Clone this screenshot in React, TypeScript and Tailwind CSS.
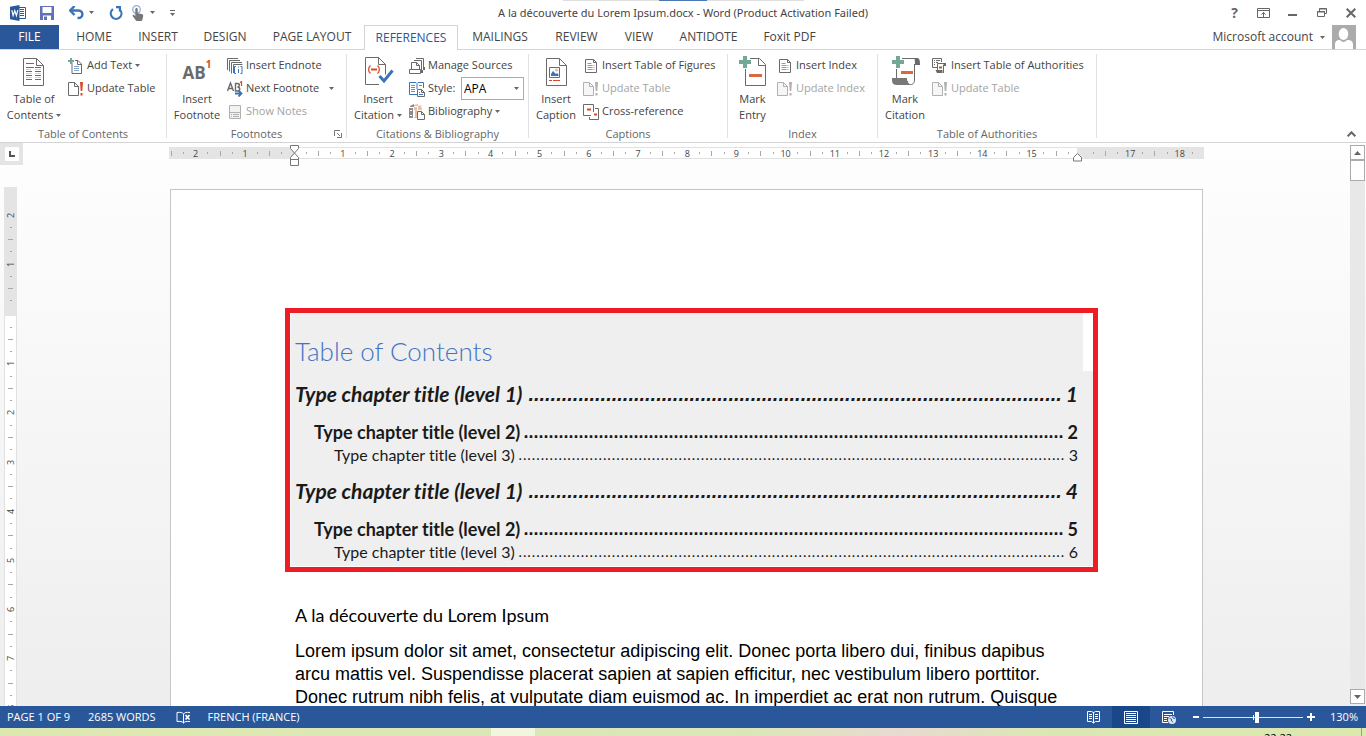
import type { ReactNode } from "react";

const INK = "#6a6a6a";
const BLUE = "#3b73b9";
const RED = "#d9482b";
const TEAL = "#72a894";
const FAINT = "#b1b1b1";

function Caret({ className = "" }: { className?: string }) {
  return (
    <svg aria-hidden="true" viewBox="0 0 5 3" className={`h-[3px] w-[5px] shrink-0 ${className}`}>
      <path d="M0 0h5L2.5 3z" fill="#666" />
    </svg>
  );
}

function Glyph({ w = 16, h = 16, children }: { w?: number; h?: number; children: ReactNode }) {
  return (
    <svg aria-hidden="true" width={w} height={h} viewBox={`0 0 ${w} ${h}`} fill="none" className="shrink-0">
      {children}
    </svg>
  );
}

/* Quick access toolbar */

function WordLogo() {
  return (
    <Glyph>
      <path d="M8 2.5h7.5v11H8z" fill="#fff" stroke="#2a569a" />
      <path d="M10 4.5h4M10 6.5h4M10 8.5h4M10 10.5h4" stroke="#2a569a" />
      <path d="M0 1.8 9.5 0v16L0 14.2z" fill="#2a569a" />
      <path d="M1.8 5.2l1.3 5.4L4.8 5.6l1.6 5L7.8 5.2" stroke="#fff" strokeWidth="1.2" />
    </Glyph>
  );
}

function SaveIcon() {
  return (
    <Glyph w={14} h={14}>
      <path d="M0 0h14v14H0z" fill="#6470b5" />
      <path d="M2.5 1h9v6h-9z" fill="#fff" />
      <path d="M3 9.5h8V14H3z" fill="#fff" />
      <path d="M4 10.5h3V14H4z" fill="#6470b5" />
    </Glyph>
  );
}

function UndoIcon() {
  return (
    <Glyph w={15} h={14}>
      <path d="M2 4.500h7.500c5 0 5.500 7.500-.5 7.500H8.500" stroke={BLUE} strokeWidth="2.400" />
      <path d="M5.500 0 1.200 4.500l4.300 4.500" stroke={BLUE} strokeWidth="2.400" />
    </Glyph>
  );
}

function RepeatIcon() {
  return (
    <Glyph w={14} h={14}>
      <path d="M4 3.200A5.300 5.300 0 1 0 11.500 4.500" stroke={BLUE} strokeWidth="2.200" />
      <path d="M7 0h5v5.500H9.800V2.200H7z" fill={BLUE} />
    </Glyph>
  );
}

function TouchIcon() {
  return (
    <Glyph w={12} h={16}>
      <circle cx="4.500" cy="4.500" r="3.800" stroke="#8fb0d8" strokeWidth="1.300" />
      <path
        d="M3.300 4.200c0-1.600 2.400-1.600 2.400 0v4l4 .8c1.200.3 1.600 1 1.500 2l-.6 3-.8 2H4.300L.8 11.200c-.6-1 .6-1.800 1.500-1l1 .8z"
        fill="#777"
      />
    </Glyph>
  );
}

function CustomizeIcon() {
  return (
    <Glyph w={5} h={6}>
      <path d="M0 .5h5" stroke="#666" />
      <path d="M0 3h5L2.500 6z" fill="#666" />
    </Glyph>
  );
}

/* Ribbon: large icons */

function PageOutline({ x = 0, y = 0 }: { x?: number; y?: number }) {
  return (
    <g transform={`translate(${x} ${y})`}>
      <path d="M.5.500h13l7 7v20H.500z" fill="#fff" stroke={INK} />
      <path d="M13.500.500v7h7" stroke={INK} />
    </g>
  );
}

function TocIcon() {
  return (
    <Glyph w={32} h={32}>
      <PageOutline x={5} y={2} />
      <path d="M8 7.500h8M8 11.500h8M8 15.500h6M8 19.500h6M8 23.500h6" stroke={BLUE} />
      <path d="M17 11.500h6M17 15.500h6M17 19.500h6M17 23.500h6" stroke={BLUE} />
      <path d="M8 13.500h5M8 17.500h6M8 21.500h6M17 13.500h6M17 17.500h6M17 21.500h6" stroke="#c3d3e9" />
    </Glyph>
  );
}

function CitationIcon() {
  return (
    <Glyph w={32} h={32}>
      <path d="M3.500 1.500h13l7 7v10M17 28.500H3.500v-27M16.500 1.500v7h7" stroke={INK} />
      <path d="M8.500 9.500c-2.500 2-2.500 6 0 8M15.500 9.500c2.500 2 2.500 6 0 8" stroke={RED} strokeWidth="1.300" />
      <path d="M9 13.500h6" stroke={RED} strokeWidth="2" />
      <path d="m17.500 20 4.500 5 8.500-10.500" stroke={BLUE} strokeWidth="3" />
    </Glyph>
  );
}

function CaptionIcon() {
  return (
    <Glyph w={32} h={32}>
      <PageOutline x={6} y={2} />
      <path d="M9.500 11.500h10v10h-10z" stroke={INK} fill="#fff" />
      <path d="M11 20v-2l2-3 3 3 1-1 1.500 1.500V20z" fill={BLUE} />
      <circle cx="16.500" cy="14" r="1.500" fill="#eeb99d" />
      <path d="M9 24.500h3M13 24.500h7" stroke={RED} />
    </Glyph>
  );
}

function MarkEntryIcon() {
  return (
    <Glyph w={32} h={32}>
      <path d="M13 2.500h9.500l6 6v21H8.500V13M21.500 2.500v7h7" stroke={INK} />
      <path d="M6 0h4v4h4v4h-4v4H6V8H2V4h4z" fill={TEAL} />
      <path d="M12 19.500h13" stroke="#dc6841" strokeWidth="3" />
    </Glyph>
  );
}

function MarkCitationIcon() {
  return (
    <Glyph w={32} h={32}>
      <path d="M13 2.500h14M7.500 13v10M25.500 8v16c0 6-7 6-7 1" stroke={INK} />
      <path d="M25 2h3c2.500 0 3 2 3 7h-5c0-4 0-5-1-7z" fill={INK} />
      <path d="M3 22h15c0 4 1 6 4 7H8c-5 0-5-3-5-7z" fill="#787878" />
      <path d="M7 0h4v4h4v4h-4v4H7V8H3V4h4z" fill={TEAL} />
      <path d="M12 16.500h12" stroke="#dc6841" strokeWidth="3" />
    </Glyph>
  );
}

function FootnoteIcon() {
  return (
    <span aria-hidden="true" className="flex h-8 items-start justify-center font-bold">
      <span className="pt-[7px] text-[17px] leading-[20px] text-[#6a6a6a]">AB</span>
      <span className="pt-[2px] text-[10px] leading-[13px] text-[#d9482b]">1</span>
    </span>
  );
}

/* Ribbon: small icons */

function AddTextIcon() {
  return (
    <Glyph>
      <path d="M4 4.500V15.500h9.500V6L10 2.500H7M9.500 2.500v4h4" stroke={INK} />
      <path d="M6 8.500h5M6 10.500h5M6 12.500h5" stroke="#86a5d0" />
      <path d="M2 0h2v2h2v2H4v2H2V4H0V2h2z" fill={TEAL} />
    </Glyph>
  );
}

function UpdateIcon({ disabled = false }: { disabled?: boolean }) {
  const line = disabled ? FAINT : INK;
  const bang = disabled ? FAINT : RED;
  return (
    <Glyph>
      <path d="M.500 1.500h6l4 4v9H.500z" stroke={line} fill={disabled ? "#f6f6f6" : "#fff"} />
      <path d="M6.500 1.500v4h4" stroke={line} />
      <path d="M12 1h3l-.7 9h-1.600zM12.500 12h2v2.500h-2z" fill={bang} />
    </Glyph>
  );
}

function EndnoteIcon() {
  return (
    <Glyph>
      <path d="M.500 12V.500H11M2.500 13.500v-11H13M4.500 15.500v-11H15M6.500 15V6.500h9" stroke={INK} />
      <path d="M9 8.500H7.500v7H9M13.500 8.500H15v7h-1.500M11.500 11v4M11.500 8.500v1" stroke={BLUE} />
    </Glyph>
  );
}

function NextFootnoteIcon() {
  return (
    <Glyph>
      <path d="m.500 10 3-8 3 8M1.500 7.500h4M8.500 10V2.500h2c2.500 0 2.500 3.300 0 3.500 3 .2 3 4 0 4z" stroke={INK} strokeWidth="1.400" />
      <path d="m13 1.500 1.500-1V5" stroke={RED} strokeWidth="1.200" />
      <path d="M8 12.500h6M11.500 9.500l3 3-3 3" stroke={BLUE} strokeWidth="1.800" />
    </Glyph>
  );
}

function ShowNotesIcon() {
  return (
    <Glyph>
      <path d="M2.500 1.500h11v13h-11z" fill="#f2f2f2" stroke={FAINT} />
      <path d="M2 8.500h12M4 10.500h1M6 10.500h6M4 12.500h1M6 12.500h6" stroke={FAINT} />
    </Glyph>
  );
}

function SourcesIcon() {
  return (
    <Glyph>
      <path d="M.500 11.500h11v4H.500zM2.500 11V4.500h5l3 3V11M7.500 4.500v3h3" stroke={INK} />
      <path d="M5 2.500h7.500V12M7 .500h7.500V10" stroke={INK} />
      <path d="M12 12h2v3h-2zM14 9h2v3h-2z" fill={INK} />
    </Glyph>
  );
}

function StyleIcon() {
  return (
    <Glyph>
      <path d="M8 13.500H.500v-12H7l1 1 1-1h5.500V7M8 3v5" stroke={BLUE} />
      <path d="M2 4.500h4M2 6.500h4M2 8.500h4M2 10.500h4M10 4.500h3" stroke="#8a8a8a" />
      <path d="M8.500 8.500h4l3 3v4h-7z" fill="#fff" stroke={INK} />
      <path d="M12.500 8.500v3h3" stroke={INK} />
      <path d="M10 11.500h1M10 13.500h4" stroke={BLUE} />
    </Glyph>
  );
}

function BibliographyIcon() {
  return (
    <Glyph>
      <path d="M0 4h4v10H0zM1 2l4-2v3H1z" fill="#8b8b8b" />
      <path d="M5 3h3v11H5zM9 2l3-1 1 5H9zM5 1l4-1v2H5z" fill="#efbd9f" />
      <path d="M1 6.500h2M1 11.500h2M5.500 6v7" stroke="#fff" />
      <path d="M8.500 7.500h4l3 3v5h-7z" fill="#fff" stroke={INK} />
      <path d="M12.500 7.500v3h3" stroke={INK} />
    </Glyph>
  );
}

function LinesPageIcon() {
  return (
    <Glyph>
      <path d="M2.500 1.500h8l3 3v10h-11z" stroke={INK} />
      <path d="M10.500 1.500v3h3" stroke={INK} />
      <path d="M4.500 5.500h4M4.500 7.500h7M4.500 9.500h7M4.500 11.500h7" stroke="#999" strokeDasharray="5 1" />
    </Glyph>
  );
}

function CrossReferenceIcon() {
  return (
    <Glyph>
      <path d="M8 11.500H.500v-11h10V8" stroke={INK} />
      <path d="M12 4.500h3.500v11h-9V13" stroke={INK} />
      <path d="M4 5.500h4M11 10.500h3" stroke={RED} strokeWidth="2" />
    </Glyph>
  );
}

function AuthoritiesIcon() {
  return (
    <Glyph>
      <path d="M5 9.500H.500v-9h9V4M2 2.500h1M4 2.500h4M2 4.500h1M4 4.500h2M2 6.500h1" stroke={INK} />
      <path d="M5.500 12V5.500h7M11.500 7v8" stroke={INK} />
      <path d="M11 5h3v3h-2zM3.500 12h7v3H5z" fill={INK} />
      <path d="M7 9.500h3" stroke={RED} strokeWidth="2" />
    </Glyph>
  );
}

/* Ribbon building blocks */

function BigButton({ icon, top, bottom, caret, className }: { icon: ReactNode; top: string; bottom: string; caret?: boolean; className: string }) {
  return (
    <button type="button" className={`flex shrink-0 flex-col items-center pt-[6px] leading-4 whitespace-nowrap ${className}`}>
      {icon}
      <span className="mt-[3px]">{top}</span>
      <span className="flex items-center gap-[3px]">
        {bottom}
        {caret && <Caret />}
      </span>
    </button>
  );
}

function SmallButton({ icon, label, caret, disabled }: { icon: ReactNode; label: string; caret?: "near" | "far"; disabled?: boolean }) {
  return (
    <button type="button" disabled={disabled} className="flex h-[23px] items-center gap-[3px] whitespace-nowrap disabled:text-[#a3a3a3]">
      {icon}
      <span>{label}</span>
      {caret && <Caret className={caret === "far" ? "ml-[7px]" : ""} />}
    </button>
  );
}

function Group({ title, className, launcher, children }: { title: string; className: string; launcher?: boolean; children: ReactNode }) {
  return (
    <section aria-label={title} className={`flex shrink-0 py-1 ${className}`}>
      <div className="relative flex min-w-0 flex-1 flex-col border-r border-[#e1e1e1]">
        <div className="-mt-1 flex flex-1">{children}</div>
        <h2 className="text-center text-[11px] leading-2 text-[#666]">{title}</h2>
        {launcher && (
          <button type="button" aria-label={`${title} options`} className="absolute right-[4px] bottom-0">
            <Glyph w={8} h={8}>
              <path d="M.500 6V.500H6M3 3l3 3M7.500 3v4.500H3" stroke="#777" />
            </Glyph>
          </button>
        )}
      </div>
    </section>
  );
}

function Rows({ children }: { children: ReactNode }) {
  return <div className="flex flex-col items-start pt-1">{children}</div>;
}

const tabs = [
  { name: "HOME", width: "w-16" },
  { name: "INSERT", width: "w-16" },
  { name: "DESIGN", width: "w-[70px]" },
  { name: "PAGE LAYOUT", width: "w-[104px]" },
  { name: "REFERENCES", width: "w-[94px]" },
  { name: "MAILINGS", width: "w-[84px]" },
  { name: "REVIEW", width: "w-[69px]" },
  { name: "VIEW", width: "w-14" },
  { name: "ANTIDOTE", width: "w-[83px]" },
  { name: "Foxit PDF", width: "w-[79px]" },
];

/* Rulers: one mark per quarter of a centimetre */

function range(from: number, to: number) {
  return Array.from({ length: to - from + 1 }, (_, i) => from + i);
}

function Mark({ quarter, vertical }: { quarter: number; vertical?: boolean }) {
  const turn = vertical ? "-rotate-90" : "";
  if (quarter % 4 === 0) return <span className={`text-[9px] leading-none text-[#444] ${turn}`}>{Math.abs(quarter / 4)}</span>;
  if (quarter % 2 === 0) return <span className={vertical ? "h-px w-[5px] shrink-0 bg-[#a8a8a8]" : "h-[5px] w-px shrink-0 bg-[#a8a8a8]"} />;
  return <span className={vertical ? "h-px w-[2px] shrink-0 bg-[#a8a8a8]" : "h-[2px] w-px shrink-0 bg-[#a8a8a8]"} />;
}

function Marks({ from, to, vertical, className }: { from: number; to: number; vertical?: boolean; className: string }) {
  return (
    <div className={`flex justify-between ${vertical ? "flex-col" : ""} ${className}`}>
      {range(from, to).map((q) => (
        <span key={q} className={`flex items-center justify-center ${vertical ? "h-0" : "w-0"}`}>
          <Mark quarter={q} vertical={vertical} />
        </span>
      ))}
    </div>
  );
}

/* Document */

const toc = [
  { level: 1, page: 1 },
  { level: 2, page: 2 },
  { level: 3, page: 3 },
  { level: 1, page: 4 },
  { level: 2, page: 5 },
  { level: 3, page: 6 },
];

const levels: Record<number, { line: string; leader: string; dots: number }> = {
  1: { line: "h-12 pt-[10px] text-[21px] font-bold italic", leader: "text-[20px]", dots: 96 },
  2: { line: "h-[23px] pl-[19px] text-[18px] font-bold", leader: "text-[18px]", dots: 108 },
  3: { line: "h-[26px] pl-[39px] text-[16px]", leader: "text-[16px]", dots: 123 },
};

function TocLine({ level, page }: { level: number; page: number }) {
  const { line, leader, dots } = levels[level];
  return (
    <li>
      <a href={`#page-${page}`} className={`flex leading-6 whitespace-nowrap text-[#1a1a1a] ${line}`}>
        <span>{`Type chapter title (level ${level})`}</span>
        <span aria-hidden="true" className={`ml-auto font-['Liberation_Sans',Arial,sans-serif] ${leader}`}>
          {".".repeat(dots)}
        </span>
        <span className="ml-1">{page}</span>
      </a>
    </li>
  );
}

export default function App() {
  return (
    <div className="flex h-screen flex-col overflow-hidden bg-white font-['Open_Sans','Noto_Sans',sans-serif] text-[11px] text-[#444]">
      <header className="relative grid h-[25px] shrink-0 grid-cols-[1fr_auto_1fr] items-center">
        <div aria-hidden="true" className="absolute inset-x-0 top-0 mx-auto flex h-px w-[241px] justify-center bg-[#dedede]">
          <span className="w-12 bg-[#4a78b8]" />
        </div>
        <div className="flex items-center pl-[10px]">
          <WordLogo />
          <button type="button" aria-label="Save" className="ml-[14px]"><SaveIcon /></button>
          <button type="button" aria-label="Undo" className="ml-[15px] flex items-center gap-[5px]"><UndoIcon /><Caret /></button>
          <button type="button" aria-label="Repeat" className="ml-[15px]"><RepeatIcon /></button>
          <button type="button" aria-label="Touch mode" className="ml-[9px] flex items-center gap-[6px]"><TouchIcon /><Caret /></button>
          <button type="button" aria-label="Customize quick access toolbar" className="ml-[15px]"><CustomizeIcon /></button>
        </div>
        <h1 className="pt-[1px] font-['Noto_Sans',sans-serif] text-[11px]">A la découverte du Lorem Ipsum.docx - Word (Product Activation Failed)</h1>
        <div className="flex justify-end pr-[1px]">
          <button type="button" aria-label="Help" className="flex w-[29px] items-center justify-center text-[14px] leading-4 font-bold text-[#666]">?</button>
          <button type="button" aria-label="Ribbon display options" className="flex w-[29px] items-center justify-center">
            <Glyph w={13} h={10}>
              <path d="M.500.500h12v9H.500zM0 2.500h13M6.500 9V4.500M4.500 6.500l2-2 2 2" stroke="#666" />
            </Glyph>
          </button>
          <button type="button" aria-label="Minimize" className="flex w-[29px] items-center justify-center">
            <Glyph w={9} h={10}><path d="M0 7h9" stroke="#666" strokeWidth="2" /></Glyph>
          </button>
          <button type="button" aria-label="Restore" className="flex w-[29px] items-center justify-center">
            <Glyph w={10} h={10}>
              <path d="M2.500 3V.500h7v5H8M.500 3.500h7v5h-7zM2 1h8M0 4h8" stroke="#666" />
            </Glyph>
          </button>
          <button type="button" aria-label="Close" className="flex w-[29px] items-center justify-center">
            <Glyph w={10} h={10}><path d="m.700.700 8.600 8.600M9.300.700.700 9.300" stroke="#666" strokeWidth="2" /></Glyph>
          </button>
        </div>
      </header>

      <nav aria-label="Ribbon tabs" className="flex h-[25px] shrink-0 border-b border-[#d4d4d4] text-[12px]">
        <button type="button" className="mr-[3px] w-[59px] bg-[#2a569a] text-white">FILE</button>
        {tabs.map((tab) => (
          <button
            key={tab.name}
            type="button"
            className={`${tab.width} shrink-0 whitespace-nowrap ${
              tab.name === "REFERENCES" ? "-mb-px border border-b-0 border-[#d4d4d4] bg-white text-[#2a569a]" : ""
            }`}
          >
            {tab.name}
          </button>
        ))}
        <button type="button" className="ml-auto flex items-center gap-[7px] pr-[10px]">
          Microsoft account
          <Caret />
          <svg aria-hidden="true" viewBox="0 0 24 24" className="h-6 w-6">
            <path d="M0 0h24v24H0z" fill="#ababab" />
            <ellipse cx="11.500" cy="9" rx="4.800" ry="6" fill="#fff" />
            <path d="M3 24v-4c0-4 2-5 5-5 2 2.500 5 2.500 7 0 4 0 6 1 6 5v4z" fill="#fff" />
          </svg>
        </button>
      </nav>

      <div className="flex h-[93px] shrink-0 border-b border-[#d4d4d4]">
        <Group title="Table of Contents" className="w-[167px]">
          <BigButton className="w-[68px]" icon={<TocIcon />} top="Table of" bottom="Contents" caret />
          <Rows>
            <SmallButton icon={<AddTextIcon />} label="Add Text" caret="near" />
            <SmallButton icon={<UpdateIcon />} label="Update Table" />
          </Rows>
        </Group>
        <Group title="Footnotes" className="w-[180px]" launcher>
          <BigButton className="w-[60px]" icon={<FootnoteIcon />} top="Insert" bottom="Footnote" />
          <Rows>
            <SmallButton icon={<EndnoteIcon />} label="Insert Endnote" />
            <SmallButton icon={<NextFootnoteIcon />} label="Next Footnote" caret="far" />
            <SmallButton icon={<ShowNotesIcon />} label="Show Notes" disabled />
          </Rows>
        </Group>
        <Group title="Citations & Bibliography" className="w-[182px]">
          <BigButton className="w-[62px]" icon={<CitationIcon />} top="Insert" bottom="Citation" caret />
          <Rows>
            <SmallButton icon={<SourcesIcon />} label="Manage Sources" />
            <div className="flex h-[23px] items-center gap-[3px]">
              <StyleIcon />
              <label htmlFor="citation-style" className="w-[30px]">Style:</label>
              <span className="relative flex items-center">
                <select id="citation-style" defaultValue="APA" className="h-[23px] w-[63px] appearance-none border border-[#ababab] bg-white pl-[2px] text-[12px] text-black">
                  <option>APA</option>
                </select>
                <Caret className="pointer-events-none absolute right-[5px]" />
              </span>
            </div>
            <SmallButton icon={<BibliographyIcon />} label="Bibliography" caret="near" />
          </Rows>
        </Group>
        <Group title="Captions" className="w-[199px]">
          <BigButton className="w-[54px]" icon={<CaptionIcon />} top="Insert" bottom="Caption" />
          <Rows>
            <SmallButton icon={<LinesPageIcon />} label="Insert Table of Figures" />
            <SmallButton icon={<UpdateIcon disabled />} label="Update Table" disabled />
            <SmallButton icon={<CrossReferenceIcon />} label="Cross-reference" />
          </Rows>
        </Group>
        <Group title="Index" className="w-[150px]">
          <BigButton className="w-[49px]" icon={<MarkEntryIcon />} top="Mark" bottom="Entry" />
          <Rows>
            <SmallButton icon={<LinesPageIcon />} label="Insert Index" />
            <SmallButton icon={<UpdateIcon disabled />} label="Update Index" disabled />
          </Rows>
        </Group>
        <Group title="Table of Authorities" className="w-[219px]">
          <BigButton className="w-[54px]" icon={<MarkCitationIcon />} top="Mark" bottom="Citation" />
          <Rows>
            <SmallButton icon={<AuthoritiesIcon />} label="Insert Table of Authorities" />
            <SmallButton icon={<UpdateIcon disabled />} label="Update Table" disabled />
          </Rows>
        </Group>
        <button type="button" aria-label="Collapse the ribbon" className="mt-auto ml-auto pr-[10px] pb-[5px]">
          <Glyph w={9} h={6}><path d="m.700 5.300 3.800-4 3.800 4" stroke="#666" strokeWidth="2" /></Glyph>
        </button>
      </div>

      <div className="flex min-h-0 flex-1 bg-linear-to-b from-[#fefefe] to-[#eeeeee]">
        <div className="flex min-w-0 flex-1 flex-col">
          <div className="flex h-[44px] shrink-0">
            <div className="w-6 shrink-0">
              <button type="button" aria-label="Tab selector" className="flex h-[22px] w-[23px] items-center justify-center bg-[#e4e4e4]">
                <span className="flex h-[14px] w-[14px] items-center justify-center bg-white">
                  <Glyph w={6} h={6}><path d="M1 0v5h5" stroke="#555" strokeWidth="2" /></Glyph>
                </span>
              </button>
            </div>
            <div className="flex min-w-0 flex-1 justify-center pt-1">
              <div className="flex h-[12px] w-[1035px] shrink-0">
                <Marks from={-10} to={-1} className="w-[125px] shrink-0 bg-[#e4e4e4] pr-3 pl-[2px]" />
                <div className="relative flex-1 border-y border-[#e1e1e1] bg-white">
                  <Marks from={1} to={63} className="h-full pr-2 pl-3" />
                  <span className="absolute -top-[3px] -left-[4px]">
                    <Glyph w={10} h={22}>
                      <path d="M.500.500h8v3l-4 4.500-4-4.500zM4.500 8l4 4.500v2h-8v-2zM.500 14.500h8v6h-8z" fill="#fff" stroke="#777" />
                    </Glyph>
                  </span>
                  <span className="absolute top-[5px] -right-[6px]">
                    <Glyph w={10} h={9}><path d="M.500 8V4.500l4-4 4 4V8z" fill="#fff" stroke="#777" /></Glyph>
                  </span>
                </div>
                <Marks from={65} to={73} className="w-[127px] shrink-0 bg-[#e4e4e4] pr-3 pl-4" />
              </div>
            </div>
          </div>
          <div className="flex min-h-0 flex-1">
            <div className="flex w-6 shrink-0 flex-col pr-[7px] pl-1">
              <Marks vertical from={-8} to={-1} className="h-[129px] shrink-0 bg-[#e4e4e4] pt-[28px] pb-[15px]" />
              <div className="min-h-0 flex-1 overflow-hidden border-x border-[#e1e1e1] bg-white pt-[11px]">
                <Marks vertical from={1} to={32} className="h-[381px]" />
              </div>
            </div>
            <main className="flex min-w-0 flex-1 justify-center overflow-hidden pt-[2px]">
              <article className="h-[1462px] w-[1033px] shrink-0 border border-[#c6c6c6] bg-white px-[124px] pt-[118px]">
                <nav
                  aria-label="Table of Contents"
                  className="-mr-[20px] -ml-[10px] h-[264px] border-[5px] border-[#ee1c25] bg-white pb-px pl-px font-[Lato,sans-serif] [font-variant-ligatures:none]"
                >
                  <div className="flex h-full flex-col">
                    <h2 className="mr-[10px] flex h-[58px] items-end bg-[#efefef] pb-1 pl-1 text-[26px] leading-8 font-light text-[#4472c4]">Table of Contents</h2>
                    <ul className="flex-1 bg-[#efefef] pt-px pr-[15px] pl-1">
                      {toc.map((line) => (
                        <TocLine key={line.page} {...line} />
                      ))}
                    </ul>
                  </div>
                </nav>
                <p className="mt-[31px] font-[Lato,sans-serif] text-[18px] leading-6 text-black">A la découverte du Lorem Ipsum</p>
                <p className="mt-[13px] font-['Liberation_Sans',Arial,sans-serif] text-[18px] leading-[23px] whitespace-nowrap text-black">
                  Lorem ipsum dolor sit amet, consectetur adipiscing elit. Donec porta libero dui, finibus dapibus
                  <br />
                  arcu mattis vel. Suspendisse placerat sapien at sapien efficitur, nec vestibulum libero porttitor.
                  <br />
                  Donec rutrum nibh felis, at vulputate diam euismod ac. In imperdiet ac erat non rutrum. Quisque
                </p>
              </article>
            </main>
          </div>
        </div>
        <div className="flex w-[17px] shrink-0 flex-col pt-[2px] pr-px pb-[2px] pl-px">
          <button type="button" aria-label="Scroll up" className="flex h-[15px] shrink-0 items-center justify-center border border-[#ababab] bg-white">
            <svg aria-hidden="true" viewBox="0 0 7 4" className="h-1 w-[7px]"><path d="M0 4h7L3.500 0z" fill="#666" /></svg>
          </button>
          <div className="flex-1 bg-[#e8e8e8]">
            <div className="h-[21px] border border-[#ababab] bg-white" />
          </div>
          <button type="button" aria-label="Scroll down" className="flex h-[15px] shrink-0 items-center justify-center border border-[#ababab] bg-white">
            <svg aria-hidden="true" viewBox="0 0 7 4" className="h-1 w-[7px]"><path d="M0 0h7L3.500 4z" fill="#666" /></svg>
          </button>
        </div>
      </div>

      <footer className="shrink-0">
        <div className="flex h-[22px] items-center bg-[#2a579a] pr-2 pl-[7px] text-[11px] text-white">
          <button type="button">PAGE 1 OF 9</button>
          <button type="button" className="ml-[18px]">2685 WORDS</button>
          <button type="button" aria-label="Proofing errors" className="ml-[20px]">
            <Glyph w={15} h={13}>
              <path d="M7.500 12V3c-1-1.500-3-2-6.500-1.500v9c3-.3 5.500 0 6.500 1.500zM7.500 3c1-1.500 3-2 6.500-1.500M14 10.500c-3-.3-5.500 0-6.500 1.500" stroke="#fff" />
              <path d="m9.500 4 4 4.500M13.500 4l-4 4.500" stroke="#fff" strokeWidth="1.700" />
            </Glyph>
          </button>
          <button type="button" className="ml-[17px]">FRENCH (FRANCE)</button>
          <div className="ml-auto flex h-full items-center">
            <button type="button" aria-label="Read mode" className="flex h-full w-[38px] items-center justify-center">
              <Glyph w={13} h={13}>
                <path d="M.500.500h4l2 1 2-1h4v10h-4l-2 1.500-2-1.500h-4zM6.500 1v11M2 3.500h3M2 5.500h3M2 7.500h3M8 3.500h3M8 5.500h3M8 7.500h3" stroke="#fff" />
              </Glyph>
            </button>
            <button type="button" aria-label="Print layout" className="flex h-full w-[38px] items-center justify-center bg-[#19478a]">
              <Glyph w={14} h={13}>
                <path d="M.500.500h13v12H.500zM2 2.500h10M2 4.500h10M2 6.500h10M2 8.500h10M2 10.500h10" stroke="#fff" />
              </Glyph>
            </button>
            <button type="button" aria-label="Web layout" className="flex h-full w-[38px] items-center justify-center">
              <Glyph w={14} h={13}>
                <path d="M6 11.500H.500V.500h11V4M2 3.500h8M2 5.500h5M2 7.500h3M2 9.500h3" stroke="#fff" />
                <circle cx="10" cy="9" r="4" fill="#dbe5f3" />
                <path d="m7.500 7.500 2 .5 0 2 1.500 1M10.500 5.500l.5 1.500 2 .5" stroke="#2a579a" strokeWidth=".9" />
              </Glyph>
            </button>
            <button type="button" aria-label="Zoom out" className="ml-[5px]">
              <Glyph w={6} h={8}><path d="M0 4h6" stroke="#fff" strokeWidth="2" /></Glyph>
            </button>
            <label htmlFor="zoom" className="sr-only">Zoom</label>
            <span className="relative mx-1 flex h-full w-[100px] items-center">
              <span aria-hidden="true" className="absolute left-[50px] h-[5px] w-px bg-white" />
              <input
                id="zoom"
                type="range"
                min={0}
                max={100}
                defaultValue={54}
                className="h-px w-full appearance-none bg-[#dbe5f3] [&::-webkit-slider-thumb]:h-[11px] [&::-webkit-slider-thumb]:w-1 [&::-webkit-slider-thumb]:appearance-none [&::-webkit-slider-thumb]:bg-white"
              />
            </span>
            <button type="button" aria-label="Zoom in">
              <Glyph w={8} h={8}><path d="M0 4h8M4 0v8" stroke="#fff" strokeWidth="2" /></Glyph>
            </button>
            <button type="button" className="w-[43px] text-right">130%</button>
          </div>
        </div>
        <div className="flex h-2 justify-between overflow-hidden bg-linear-to-r from-[#dde8b0] via-[#dbe6b9] to-[#dbe8ae]">
          <span className="ml-[491px] h-full w-[44px] bg-[#f2f6de]" />
          <span className="h-full w-[300px] bg-linear-to-r from-transparent via-[#e8dad0] to-transparent" />
          <span className="mr-[4px] flex w-[98px] justify-between border-r border-[#999] pr-[69px] text-[11px] leading-[20px] text-black">22:22</span>
        </div>
      </footer>
    </div>
  );
}
